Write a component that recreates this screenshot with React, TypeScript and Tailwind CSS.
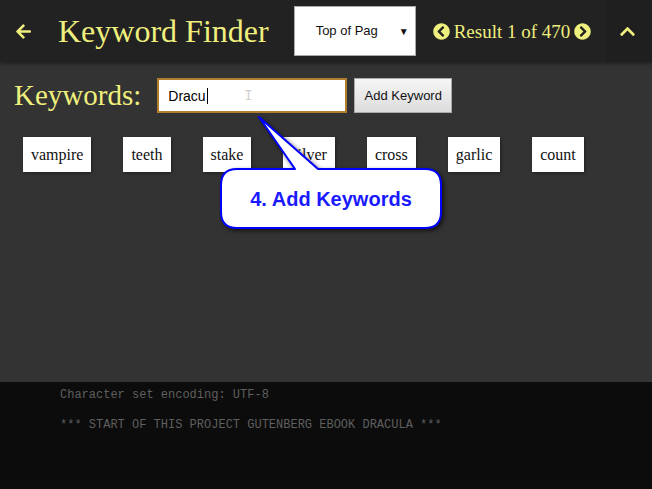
import { FaArrowLeft, FaChevronCircleLeft, FaChevronCircleRight, FaChevronUp } from "react-icons/fa";

const keywords = ["vampire", "teeth", "stake", "silver", "cross", "garlic", "count"];

function Callout() {
  return (
    <div className="pointer-events-none absolute left-0 top-0 h-[489px] w-[652px]">
      <svg
        width="652"
        height="489"
        className="absolute left-0 top-0 drop-shadow-[2px_2px_2px_rgba(0,0,0,0.6)]"
      >
        <path
          d="M 237 169 L 295 169 L 259 117 L 318 169 L 425 169 Q 441 169 441 185 L 441 212 Q 441 228 425 228 L 237 228 Q 221 228 221 212 L 221 185 Q 221 169 237 169 Z"
          fill="#ffffff"
          stroke="#0000ff"
          strokeWidth="2"
          strokeLinejoin="round"
        />
      </svg>
      <div className="absolute left-[221px] top-[169px] flex h-[59px] w-[220px] items-center justify-center font-['Liberation_Sans',Arial,sans-serif] text-[20px] font-bold text-[#1a1aff]">
        4. Add Keywords
      </div>
    </div>
  );
}

export default function App() {
  return (
    <div className="relative flex h-[489px] w-[652px] flex-col overflow-hidden bg-[#333]">
      <header className="flex h-[62px] shrink-0 items-center bg-[#222] shadow-[0_1px_4px_rgba(0,0,0,0.5)]">
        <FaArrowLeft className="ml-[15px] text-[17px] text-[#efef7d]" />
        <h1 className="ml-[26px] font-['Liberation_Serif',serif] text-[32px] leading-none text-[#efef7d]">
          Keyword Finder
        </h1>
        <div className="ml-[25px] flex h-[50px] w-[122px] items-center border border-[#aaa] bg-white pl-[21px] pr-[6px] font-['Liberation_Sans',Arial,sans-serif] text-[13px] text-[#111]">
          <span className="flex-1">Top of Pag</span>
          <span className="text-[10px]">▼</span>
        </div>
        <div className="ml-[17px] flex items-center gap-[4px] text-[#efef7d]">
          <FaChevronCircleLeft className="text-[17px]" />
          <span className="font-['Liberation_Serif',serif] text-[19px] leading-none">Result 1 of 470</span>
          <FaChevronCircleRight className="text-[17px]" />
        </div>
        <div className="ml-auto flex h-full w-[46px] items-center justify-center bg-[#1f1f1f]">
          <FaChevronUp className="ml-[-4px] text-[17px] text-[#efef7d]" />
        </div>
      </header>

      <main className="flex-1">
        <div className="mt-[16px] flex items-center">
          <span className="ml-[14px] font-['Liberation_Serif',serif] text-[29px] leading-none text-[#efef7d]">
            Keywords:
          </span>
          <div className="relative ml-[16px] flex h-[35px] w-[190px] items-center border-2 border-[#b07e2c] bg-white pl-[9px] font-['Liberation_Sans',Arial,sans-serif] text-[14px] text-black">
            <span className="border-r border-black pr-[1px] leading-[16px]">Dracu</span>
            <span className="absolute left-[85px] top-[9px] font-['Liberation_Mono',monospace] text-[14px] leading-none text-[#cfcfcf]">
              I
            </span>
          </div>
          <button className="ml-[7px] h-[35px] w-[98px] border border-[#aaa] bg-gradient-to-b from-[#f6f6f6] to-[#dcdcdc] font-['Liberation_Sans',Arial,sans-serif] text-[13px] text-[#111]">
            Add Keyword
          </button>
        </div>

        <div className="mt-[24px] flex gap-[32px] pl-[23px]">
          {keywords.map((k) => (
            <div
              key={k}
              className="flex h-[35px] items-center bg-white px-[8px] font-['Liberation_Serif',serif] text-[16px] text-[#111] shadow-[1px_1px_3px_rgba(0,0,0,0.4)]"
            >
              {k}
            </div>
          ))}
        </div>
      </main>

      <footer className="h-[107px] shrink-0 bg-[#0c0c0c] pl-[60px] pt-[6px] font-['Liberation_Mono',monospace] text-[12px] leading-[15px] text-[#5f5f5f]">
        <p>Character set encoding: UTF-8</p>
        <p className="mt-[15px]">*** START OF THIS PROJECT GUTENBERG EBOOK DRACULA ***</p>
      </footer>

      <Callout />
    </div>
  );
}
